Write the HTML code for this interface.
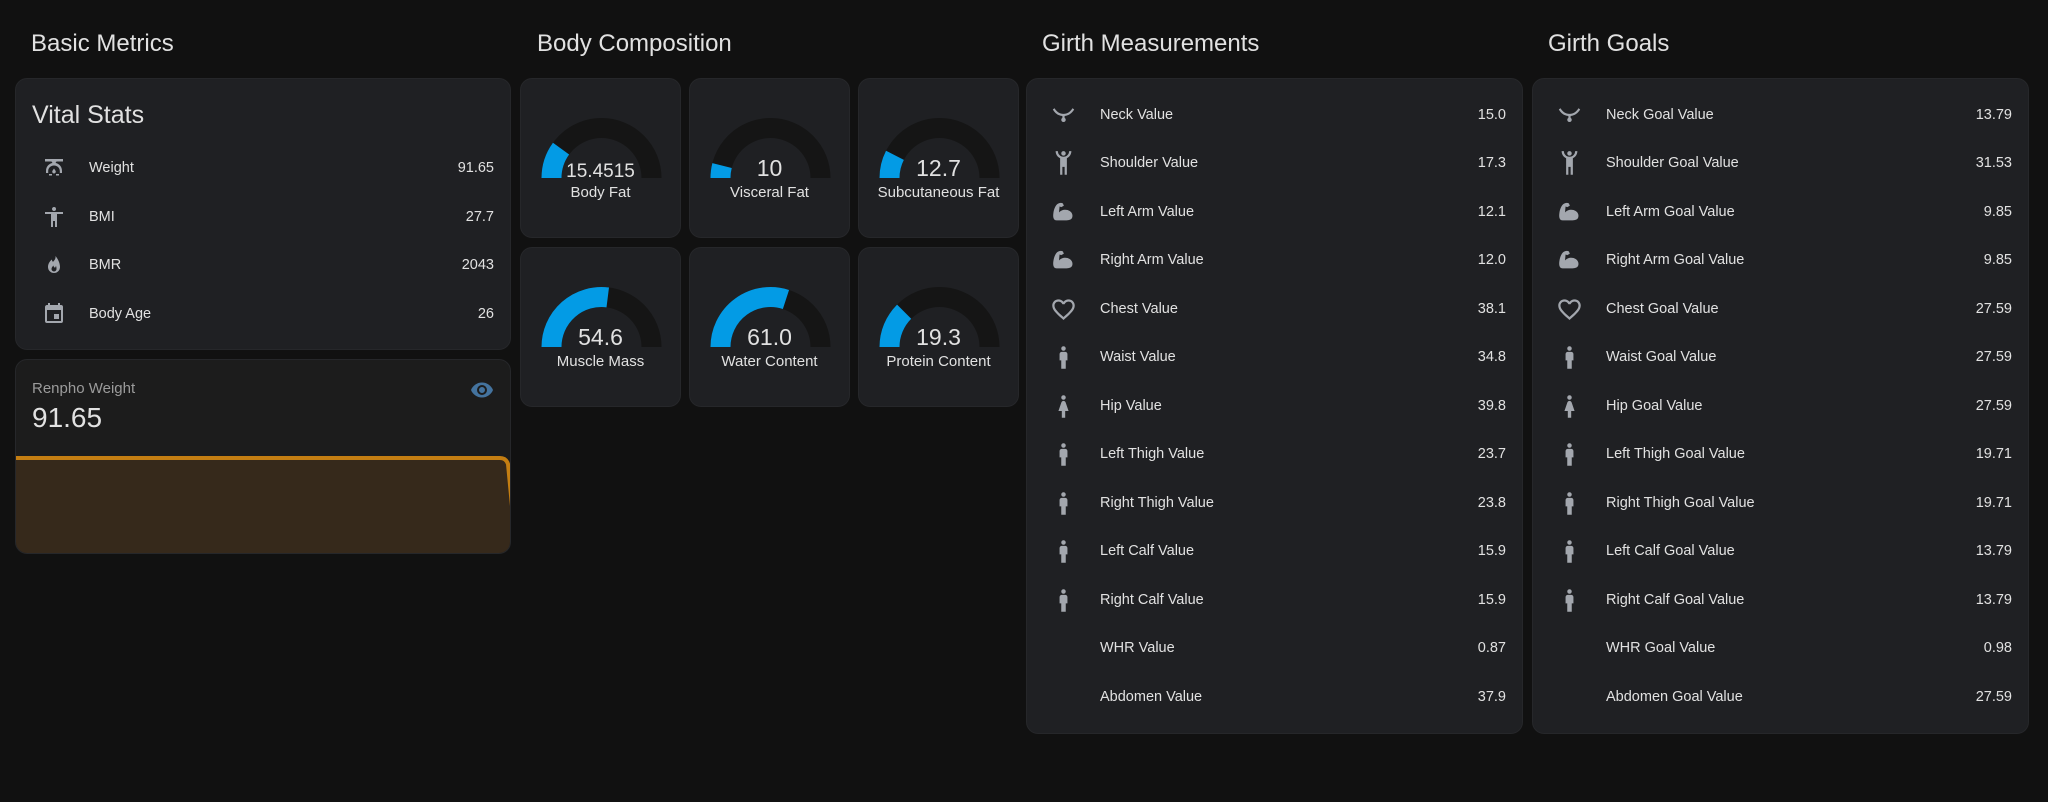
<!DOCTYPE html>
<html><head><meta charset="utf-8"><style>
*{margin:0;padding:0;box-sizing:border-box}
body{width:2048px;height:802px;background:#111111;font-family:"Liberation Sans",sans-serif;color:#e1e1e1;position:relative;overflow:hidden}
.h{position:absolute;top:30px;font-size:24px;color:#e1e1e1}
.card{position:absolute;background:#1f2023;border-radius:12px;border:1px solid #26272a}
.row{position:absolute;left:0;right:0;height:48px;display:flex;align-items:center;font-size:14.5px}
.row svg{position:absolute;width:24px;height:24px;fill:#a3a7ae}
.gc .row svg{width:27px;height:27px}
.row .l{position:absolute}
.row .v{position:absolute;right:16px}
.g{position:absolute;width:161px;height:160px;background:#1f2023;border-radius:12px;border:1px solid #26272a}
.g svg{position:absolute;left:0;top:0}
.gv{position:absolute;left:0;right:0;text-align:center;top:76px;font-size:23px}
.gl{position:absolute;left:0;right:0;text-align:center;top:105px;font-size:15px}
</style></head><body>
<div class="h" style="left:31px">Basic Metrics</div>
<div class="h" style="left:537px">Body Composition</div>
<div class="h" style="left:1042px">Girth Measurements</div>
<div class="h" style="left:1548px">Girth Goals</div>

<div class="card" style="left:15px;top:78px;width:496px;height:272px">
<div style="position:absolute;left:16px;top:22px;font-size:25px">Vital Stats</div>
<div class="row" style="top:65px"><svg style="left:26px" viewBox="0 0 24 24"><path d="M3 3h18v2.5h-6.5l-1 1.5c3.5.5 6.5 3.5 6.5 8v2h-2.2v-2c0-3-2.4-5.5-5.8-5.5S6.2 12 6.2 15v2H4v-2c0-4.5 3-7.5 6.5-8l-1-1.5H3zM12 12.5l1.6 2.4a1.8 1.8 0 1 1-3.2 0zM7 18h3v1.5H7zm7 0h3v1.5h-3z"/></svg><span class="l" style="left:73px">Weight</span><span class="v">91.65</span></div>
<div class="row" style="top:114px"><svg style="left:26px" viewBox="0 0 24 24"><path d="M21,9H15V22H13V16H11V22H9V9H3V7H21M12,2A2,2 0 0,1 14,4A2,2 0 0,1 12,6C10.89,6 10,5.1 10,4C10,2.89 10.89,2 12,2Z"/></svg><span class="l" style="left:73px">BMI</span><span class="v">27.7</span></div>
<div class="row" style="top:162px"><svg style="left:26px" viewBox="0 0 24 24"><path d="M13.5 3c.5 3-1.5 4.5-2.5 6-.6-.8-1-1.5-1.2-2.5C7.5 8.5 6 11 6 14a6 6 0 0 0 12 0c0-4.5-2.5-8.5-4.5-11zM12 18.5a2.5 2.5 0 0 1-2.5-2.5c0-1.5 1-2.5 2-3.5 0 1.2.6 1.800 1.5 2.2.6-.7.8-1.4.9-2 .4.8.6 1.8.6 3.3a2.5 2.5 0 0 1-2.5 2.5z"/></svg><span class="l" style="left:73px">BMR</span><span class="v">2043</span></div>
<div class="row" style="top:211px"><svg style="left:26px" viewBox="0 0 24 24"><path d="M12,12H17V17H12M19,19H5V8H19M19,3H18V1H16V3H8V1H6V3H5C3.89,3 3,3.9 3,5V19A2,2 0 0,0 5,21H19A2,2 0 0,0 21,19V5A2,2 0 0,0 19,3Z"/></svg><span class="l" style="left:73px">Body Age</span><span class="v">26</span></div>
</div>

<div class="card" style="left:15px;top:359px;width:496px;height:195px;background:#1c1c1c;overflow:hidden">
<div style="position:absolute;left:16px;top:20px;font-size:15px;color:#9b9b9b">Renpho Weight</div>
<div style="position:absolute;left:16px;top:42px;font-size:28px">91.65</div>
<svg style="position:absolute;right:16px;top:18px" width="24" height="24" viewBox="0 0 24 24" fill="#44739e"><path d="M12,9A3,3 0 0,0 9,12A3,3 0 0,0 12,15A3,3 0 0,0 15,12A3,3 0 0,0 12,9M12,17A5,5 0 0,1 7,12A5,5 0 0,1 12,7A5,5 0 0,1 17,12A5,5 0 0,1 12,17M12,4.5C7,4.5 2.73,7.61 1,12C2.73,16.39 7,19.5 12,19.5C17,19.5 21.27,16.39 23,12C21.27,7.61 17,4.5 12,4.5Z"/></svg>
<svg style="position:absolute;left:0;top:0" width="496" height="195"><path d="M-2 98 H484 Q490 98 492 104 L496 146 V195 H-2Z" fill="#36291b"/><path d="M-2 98 H484 Q490 98 492 104 L496 146" fill="none" stroke="#c47e12" stroke-width="4"/></svg>
</div>

<div class="g" style="left:520px;top:78px"><svg width="161" height="160"><path d="M30.5 99 A50 50 0 0 1 130.5 99" fill="none" stroke="#151515" stroke-width="20"/><path d="M30.5 99 A50 50 0 0 1 40.05 69.6" fill="none" stroke="#039be5" stroke-width="20"/></svg><div class="gv" style="font-size:19px;top:82px">15.4515</div><div class="gl">Body Fat</div></div>
<div class="g" style="left:689px;top:78px"><svg width="161" height="160"><path d="M30.5 99 A50 50 0 0 1 130.5 99" fill="none" stroke="#151515" stroke-width="20"/><path d="M30.5 99 A50 50 0 0 1 32.05 86.55" fill="none" stroke="#039be5" stroke-width="20"/></svg><div class="gv">10</div><div class="gl">Visceral Fat</div></div>
<div class="g" style="left:858px;top:78px"><svg width="161" height="160"><path d="M30.5 99 A50 50 0 0 1 130.5 99" fill="none" stroke="#151515" stroke-width="20"/><path d="M30.5 99 A50 50 0 0 1 35.95 76.3" fill="none" stroke="#039be5" stroke-width="20"/></svg><div class="gv">12.7</div><div class="gl">Subcutaneous Fat</div></div>
<div class="g" style="left:520px;top:247px"><svg width="161" height="160"><path d="M30.5 99 A50 50 0 0 1 130.5 99" fill="none" stroke="#151515" stroke-width="20"/><path d="M30.5 99 A50 50 0 0 1 86.75 49.4" fill="none" stroke="#039be5" stroke-width="20"/></svg><div class="gv">54.6</div><div class="gl">Muscle Mass</div></div>
<div class="g" style="left:689px;top:247px"><svg width="161" height="160"><path d="M30.5 99 A50 50 0 0 1 130.5 99" fill="none" stroke="#151515" stroke-width="20"/><path d="M30.5 99 A50 50 0 0 1 95.95 51.45" fill="none" stroke="#039be5" stroke-width="20"/></svg><div class="gv">61.0</div><div class="gl">Water Content</div></div>
<div class="g" style="left:858px;top:247px"><svg width="161" height="160"><path d="M30.5 99 A50 50 0 0 1 130.5 99" fill="none" stroke="#151515" stroke-width="20"/><path d="M30.5 99 A50 50 0 0 1 45.15 63.65" fill="none" stroke="#039be5" stroke-width="20"/></svg><div class="gv">19.3</div><div class="gl">Protein Content</div></div>

<svg width="0" height="0" style="position:absolute">
<defs>
<symbol id="neck" viewBox="0 0 24 24"><path d="M2.5 6.5l1.6-1c1.6 3 4.5 5 7.9 5s6.3-2 7.9-5l1.6 1c-1.8 3.3-4.8 5.5-8.5 5.900v1.7a2 2 0 1 1-2 0v-1.7C6.9 12 4.3 9.8 2.5 6.5z"/></symbol>
<symbol id="hands" viewBox="0 0 24 24"><path d="M5,1C5,3.7 6.56,6.16 9,7.32V22H11V15H13V22H15V7.31C17.44,6.16 19,3.7 19,1H17A5,5 0 0,1 12,6A5,5 0 0,1 7,1M12,1C10.89,1 10,1.89 10,3C10,4.11 10.89,5 12,5C13.11,5 14,4.11 14,3C14,1.89 13.11,1 12,1Z"/></symbol>
<symbol id="arm" viewBox="0 0 24 24"><path d="M6 5c1.5-1.5 4-2 5.5-1l.8 2-2.3 1.2-1.5-.5-.5 5.300c2-2.5 6.5-3.3 9.500-1.300 2.500 1.600 3 4.300 2 6.300-1 1.500-3 2-6 2H6C3 19 2.500 16 3 12.500 3.500 9 4.800 6.300 6 5z"/></symbol>
<symbol id="heart" viewBox="0 0 24 24"><path d="M12.1,18.55L12,18.65L11.89,18.55C7.14,14.24 4,11.39 4,8.5C4,6.5 5.5,5 7.5,5C9.04,5 10.54,6 11.07,7.36H12.93C13.46,6 14.960,5 16.5,5C18.5,5 20,6.5 20,8.5C20,11.39 16.86,14.24 12.1,18.55M16.5,3C14.76,3 13.09,3.81 12,5.08C10.91,3.81 9.24,3 7.5,3C4.42,3 2,5.41 2,8.5C2,12.27 5.4,15.36 10.55,20.03L12,21.35L13.45,20.03C18.6,15.36 22,12.27 22,8.5C22,5.41 19.58,3 16.5,3Z"/></symbol>
<symbol id="male" viewBox="0 0 24 24"><path d="M12,2A2,2 0 0,1 14,4A2,2 0 0,1 12,6A2,2 0 0,1 10,4A2,2 0 0,1 12,2M10.5,7H13.5A2,2 0 0,1 15.5,9V14.5H14V22H10V14.5H8.5V9A2,2 0 0,1 10.5,7Z"/></symbol>
<symbol id="female" viewBox="0 0 24 24"><path d="M12,2A2,2 0 0,1 14,4A2,2 0 0,1 12,6A2,2 0 0,1 10,4A2,2 0 0,1 12,2M10.5,22V16H7.5L10.09,8.41C10.34,7.59 11.1,7 12,7C12.9,7 13.66,7.59 13.910,8.41L16.5,16H13.5V22H10.5Z"/></symbol>
</defs></svg>

<div class="card gc" style="left:1026px;top:78px;width:497px;height:656px">
<div class="row" style="top:12px"><svg style="left:23px" viewBox="0 0 24 24"><use href="#neck" width="24" height="24"/></svg><span class="l" style="left:73px">Neck Value</span><span class="v">15.0</span></div>
<div class="row" style="top:60px"><svg style="left:23px" viewBox="0 0 24 24"><use href="#hands" width="24" height="24"/></svg><span class="l" style="left:73px">Shoulder Value</span><span class="v">17.3</span></div>
<div class="row" style="top:109px"><svg style="left:23px" viewBox="0 0 24 24"><use href="#arm" width="24" height="24"/></svg><span class="l" style="left:73px">Left Arm Value</span><span class="v">12.1</span></div>
<div class="row" style="top:157px"><svg style="left:23px" viewBox="0 0 24 24"><use href="#arm" width="24" height="24"/></svg><span class="l" style="left:73px">Right Arm Value</span><span class="v">12.0</span></div>
<div class="row" style="top:206px"><svg style="left:23px" viewBox="0 0 24 24"><use href="#heart" width="24" height="24"/></svg><span class="l" style="left:73px">Chest Value</span><span class="v">38.1</span></div>
<div class="row" style="top:254px"><svg style="left:23px" viewBox="0 0 24 24"><use href="#male" width="24" height="24"/></svg><span class="l" style="left:73px">Waist Value</span><span class="v">34.8</span></div>
<div class="row" style="top:303px"><svg style="left:23px" viewBox="0 0 24 24"><use href="#female" width="24" height="24"/></svg><span class="l" style="left:73px">Hip Value</span><span class="v">39.8</span></div>
<div class="row" style="top:351px"><svg style="left:23px" viewBox="0 0 24 24"><use href="#male" width="24" height="24"/></svg><span class="l" style="left:73px">Left Thigh Value</span><span class="v">23.7</span></div>
<div class="row" style="top:400px"><svg style="left:23px" viewBox="0 0 24 24"><use href="#male" width="24" height="24"/></svg><span class="l" style="left:73px">Right Thigh Value</span><span class="v">23.8</span></div>
<div class="row" style="top:448px"><svg style="left:23px" viewBox="0 0 24 24"><use href="#male" width="24" height="24"/></svg><span class="l" style="left:73px">Left Calf Value</span><span class="v">15.9</span></div>
<div class="row" style="top:497px"><svg style="left:23px" viewBox="0 0 24 24"><use href="#male" width="24" height="24"/></svg><span class="l" style="left:73px">Right Calf Value</span><span class="v">15.9</span></div>
<div class="row" style="top:545px"><span class="l" style="left:73px">WHR Value</span><span class="v">0.87</span></div>
<div class="row" style="top:594px"><span class="l" style="left:73px">Abdomen Value</span><span class="v">37.9</span></div>
</div>

<div class="card gc" style="left:1532px;top:78px;width:497px;height:656px">
<div class="row" style="top:12px"><svg style="left:23px" viewBox="0 0 24 24"><use href="#neck" width="24" height="24"/></svg><span class="l" style="left:73px">Neck Goal Value</span><span class="v">13.79</span></div>
<div class="row" style="top:60px"><svg style="left:23px" viewBox="0 0 24 24"><use href="#hands" width="24" height="24"/></svg><span class="l" style="left:73px">Shoulder Goal Value</span><span class="v">31.53</span></div>
<div class="row" style="top:109px"><svg style="left:23px" viewBox="0 0 24 24"><use href="#arm" width="24" height="24"/></svg><span class="l" style="left:73px">Left Arm Goal Value</span><span class="v">9.85</span></div>
<div class="row" style="top:157px"><svg style="left:23px" viewBox="0 0 24 24"><use href="#arm" width="24" height="24"/></svg><span class="l" style="left:73px">Right Arm Goal Value</span><span class="v">9.85</span></div>
<div class="row" style="top:206px"><svg style="left:23px" viewBox="0 0 24 24"><use href="#heart" width="24" height="24"/></svg><span class="l" style="left:73px">Chest Goal Value</span><span class="v">27.59</span></div>
<div class="row" style="top:254px"><svg style="left:23px" viewBox="0 0 24 24"><use href="#male" width="24" height="24"/></svg><span class="l" style="left:73px">Waist Goal Value</span><span class="v">27.59</span></div>
<div class="row" style="top:303px"><svg style="left:23px" viewBox="0 0 24 24"><use href="#female" width="24" height="24"/></svg><span class="l" style="left:73px">Hip Goal Value</span><span class="v">27.59</span></div>
<div class="row" style="top:351px"><svg style="left:23px" viewBox="0 0 24 24"><use href="#male" width="24" height="24"/></svg><span class="l" style="left:73px">Left Thigh Goal Value</span><span class="v">19.71</span></div>
<div class="row" style="top:400px"><svg style="left:23px" viewBox="0 0 24 24"><use href="#male" width="24" height="24"/></svg><span class="l" style="left:73px">Right Thigh Goal Value</span><span class="v">19.71</span></div>
<div class="row" style="top:448px"><svg style="left:23px" viewBox="0 0 24 24"><use href="#male" width="24" height="24"/></svg><span class="l" style="left:73px">Left Calf Goal Value</span><span class="v">13.79</span></div>
<div class="row" style="top:497px"><svg style="left:23px" viewBox="0 0 24 24"><use href="#male" width="24" height="24"/></svg><span class="l" style="left:73px">Right Calf Goal Value</span><span class="v">13.79</span></div>
<div class="row" style="top:545px"><span class="l" style="left:73px">WHR Goal Value</span><span class="v">0.98</span></div>
<div class="row" style="top:594px"><span class="l" style="left:73px">Abdomen Goal Value</span><span class="v">27.59</span></div>
</div>
</body></html>
